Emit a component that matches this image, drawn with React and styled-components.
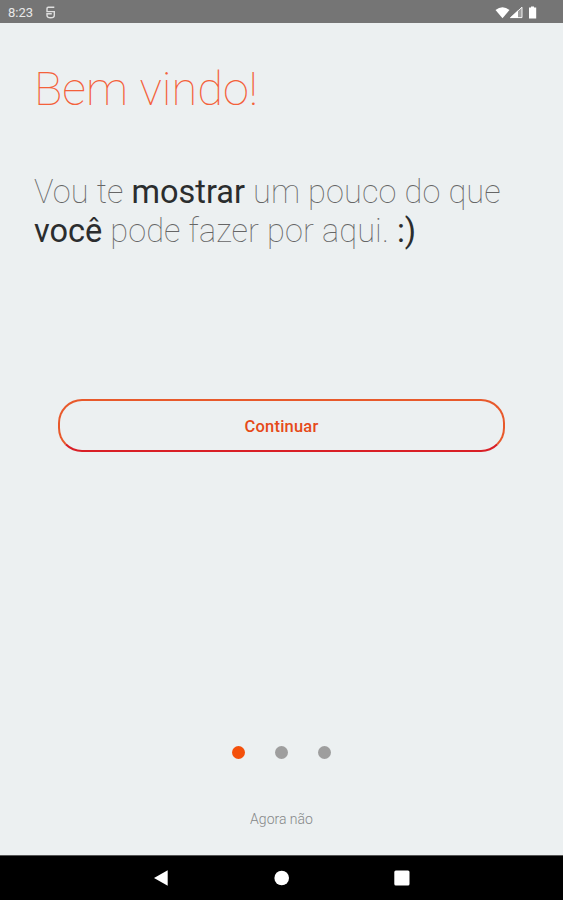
import React, { useState } from 'react';
import styled, { createGlobalStyle } from 'styled-components';

const GlobalStyle = createGlobalStyle`
  * {
    box-sizing: border-box;
  }

  body {
    margin: 0;
    font-family: Roboto, "Liberation Sans", sans-serif;
  }
`;

const Screen = styled.div`
  display: flex;
  flex-direction: column;
  height: 100vh;
  background: #ecf0f1;
`;

const StatusBar = styled.header`
  display: flex;
  align-items: center;
  justify-content: space-between;
  height: 23px;
  padding: 2px 24px 0 8px;
  background: #757575;
  color: #e8e8e8;
  font-size: 13px;

  div {
    display: flex;
    align-items: center;
  }

  .notice {
    margin-left: 12px;
  }
`;

const Content = styled.main`
  flex: 1;
  display: flex;
  flex-direction: column;
  align-items: center;
  padding: 38px 34px 0;
`;

const Title = styled.h1`
  align-self: flex-start;
  margin: 0;
  color: #f4613a;
  font-size: 47px;
  font-weight: 100;
  line-height: 56px;
`;

const Message = styled.p`
  align-self: flex-start;
  margin: 56px 0 0;
  color: #666;
  font-size: 32.5px;
  font-weight: 100;
  letter-spacing: 0.14px;
  line-height: 38.5px;
  white-space: nowrap;

  strong {
    color: #2b2d2e;
    font-weight: 400;
    letter-spacing: 0;
  }
`;

const ContinueButton = styled.button`
  width: 447px;
  height: 53px;
  margin-top: 149px;
  padding: 0;
  border: 2px solid #e8592b;
  border-bottom-color: #d91f26;
  border-radius: 24px;
  background: transparent;
  color: #e64a19;
  font-family: inherit;
  font-size: 16.5px;
  font-weight: 500;
  letter-spacing: 0.2px;
  line-height: 20px;
  cursor: pointer;

  span {
    display: block;
    padding-top: 3px;
  }
`;

const Dots = styled.div`
  display: flex;
  gap: 30px;
  margin-top: auto;
`;

const Dot = styled.button`
  width: 13px;
  height: 13px;
  padding: 0;
  border: none;
  border-radius: 50%;
  background: ${(props) => (props.$active ? '#f4500b' : '#9e9e9e')};
  cursor: pointer;
`;

const SkipLink = styled.a`
  margin: 51px 0 27px;
  color: #858788;
  font-size: 14px;
  font-weight: 300;
  line-height: 18px;
  cursor: pointer;
`;

const NavBar = styled.nav`
  display: flex;
  align-items: center;
  justify-content: center;
  gap: 104px;
  height: 45px;
  border-top: 1px solid #555;
  background: #000;

  svg {
    display: block;
  }
`;

function App() {
  const [step, setStep] = useState(0);

  return (
    <>
      <GlobalStyle />
      <Screen>
        <StatusBar>
          <div>
            <span>8:23</span>
            <svg className='notice' width='11' height='13' viewBox='0 0 11 13' fill='none' stroke='#e0e0e0' strokeWidth='1.4'>
              <path d='M9.3 1.2H3.2Q2 1.2 2 2.4V5.6H9.3V9.2Q9.3 11.8 5.6 11.8Q2 11.8 2 9.2V7.8H6.8' />
            </svg>
          </div>
          <div>
            <svg width='44' height='14' viewBox='0 0 44 14' fill='#fff'>
              <path d='M0.5 4Q7.5 -1.5 14.5 4L7.5 12.3Z' />
              <path d='M27 1V12H15Z' fillOpacity='0.3' />
              <path d='M23 4.5V12H15Z' />
              <path d='M15.6 11.6L27 1.2V11.6Z' fill='none' stroke='#fff' strokeWidth='0.9' />
              <path d='M36 0.5H39V1.5H41.2V12.5H34V1.5H36Z' />
            </svg>
          </div>
        </StatusBar>
        <Content>
          <Title>Bem vindo!</Title>
          <Message>
            Vou te <strong>mostrar</strong> um pouco do que<br />
            <strong>você</strong> pode fazer por aqui. <strong>:)</strong>
          </Message>
          <ContinueButton onClick={() => setStep(Math.min(step + 1, 2))}>
            <span>Continuar</span>
          </ContinueButton>
          <Dots>
            {[0, 1, 2].map((i) => (
              <Dot key={i} $active={i === step} onClick={() => setStep(i)} />
            ))}
          </Dots>
          <SkipLink>Agora não</SkipLink>
        </Content>
        <NavBar>
          <svg width='16' height='16' viewBox='0 0 16 16' fill='#fff'>
            <path d='M0 8L13.7 0.2V15.8Z' />
          </svg>
          <svg width='16' height='16' viewBox='0 0 16 16' fill='#fff'>
            <circle cx='7.7' cy='8' r='7.3' />
          </svg>
          <svg width='16' height='16' viewBox='0 0 16 16' fill='#fff'>
            <rect x='0.3' y='0.4' width='15.2' height='15.2' rx='1.5' />
          </svg>
        </NavBar>
      </Screen>
    </>
  );
}

export default App;
